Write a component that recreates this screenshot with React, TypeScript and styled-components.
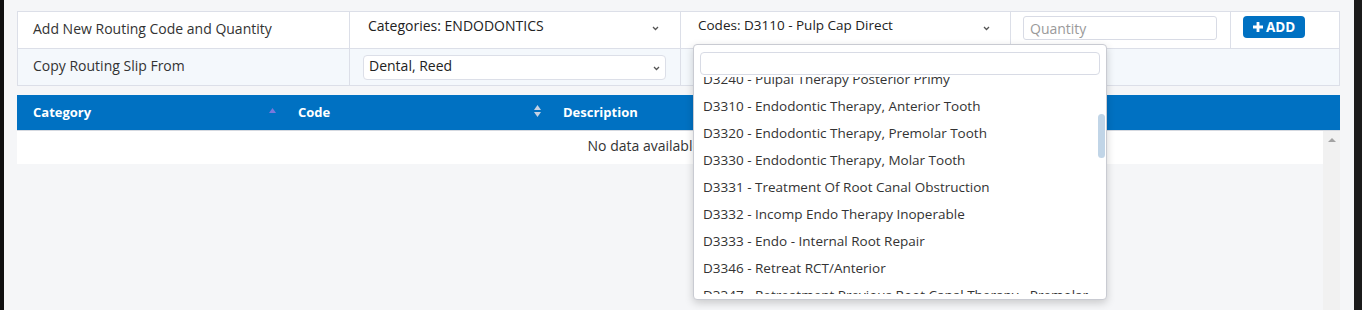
import React, { useLayoutEffect, useRef } from 'react';
import styled, { createGlobalStyle } from 'styled-components';

const GlobalStyle = createGlobalStyle`
  html, body {
    margin: 0;
    padding: 0;
    background: #f5f6f8;
  }
  body {
    font-family: 'Open Sans', 'Liberation Sans', sans-serif;
    font-size: 14px;
    color: #333;
    overflow: hidden;
  }
  * { box-sizing: border-box; }
`;

const codes = [
  'D3110 - Pulp Cap Direct',
  'D3120 - Pulp Cap Indirect',
  'D3220 - Therapeutic Pulpotomy',
  'D3221 - Pulpal Debridement',
  'D3222 - Partial Pulpotomy Apexogenesis',
  'D3230 - Pulpal Therapy Anterior Primy',
  'D3240 - Pulpal Therapy Posterior Primy',
  'D3310 - Endodontic Therapy, Anterior Tooth',
  'D3320 - Endodontic Therapy, Premolar Tooth',
  'D3330 - Endodontic Therapy, Molar Tooth',
  'D3331 - Treatment Of Root Canal Obstruction',
  'D3332 - Incomp Endo Therapy Inoperable',
  'D3333 - Endo - Internal Root Repair',
  'D3346 - Retreat RCT/Anterior',
  'D3347 - Retreatment Previous Root Canal Therapy - Premolar',
  'D3348 - Retreatment Previous Root Canal Therapy - Molar',
  'D3351 - Apexification/Recalc Initial',
  'D3352 - Apexification/Recalc Interim',
  'D3353 - Apexification/Recalc Final',
  'D3355 - Pulpal Regeneration Initial',
  'D3356 - Pulpal Regeneration Interim',
  'D3357 - Pulpal Regeneration Completion',
  'D3410 - Apicoectomy Anterior',
  'D3421 - Apicoectomy Premolar',
  'D3425 - Apicoectomy Molar',
  'D3426 - Apicoectomy Each Add Root',
  'D3427 - Periradicular Surgery W/O Apico',
  'D3428 - Bone Graft Periradicular',
  'D3429 - Bone Graft Each Add Site',
  'D3430 - Retrograde Filling',
  'D3431 - Biologic Materials Periradicular',
  'D3432 - Guided Tissue Regeneration',
  'D3450 - Root Amputation',
  'D3460 - Endodontic Endosseous Implant',
  'D3470 - Intentional Replantation',
  'D3471 - Surgical Repair Root Resorption Anterior',
  'D3472 - Surgical Repair Root Resorption Premolar',
  'D3473 - Surgical Repair Root Resorption Molar',
  'D3501 - Surgical Exposure Root Anterior',
  'D3502 - Surgical Exposure Root Premolar',
  'D3503 - Surgical Exposure Root Molar',
  'D3910 - Isolation Tooth W Rubber Dam',
  'D3920 - Tooth Splitting',
  'D3950 - Canal Prep/Fitting Of Dowel',
  'D3999 - Endodontic Procedure',
];

const Chevron = () => (
  <svg width="7" height="5" viewBox="0 0 7 5">
    <path d="M1 1l2.5 2.5L6 1" fill="none" stroke="#555" strokeWidth="1.3" />
  </svg>
);

const SortUp = () => (
  <svg width="7" height="6" viewBox="0 0 7 6">
    <path d="M3.5 0L7 5H0z" fill="#7b78dc" />
  </svg>
);

const SortBoth = () => (
  <svg width="7" height="12" viewBox="0 0 7 12">
    <path d="M3.5 0L7 5H0z" fill="#c7d2e3" />
    <path d="M3.5 12L0 7h7z" fill="#c7d2e3" />
  </svg>
);

const PlusIcon = () => (
  <svg width="10" height="10" viewBox="0 0 10 10">
    <path d="M3.6 0h2.8v3.6H10v2.8H6.4V10H3.6V6.4H0V3.6h3.6z" fill="#fff" />
  </svg>
);

const App: React.FC = () => {
  const listRef = useRef<HTMLDivElement>(null);

  useLayoutEffect(() => {
    if (listRef.current) {
      listRef.current.scrollTop = 6 * 27 + 11;
    }
  }, []);

  return (
    <Screen>
      <GlobalStyle />
      <EdgeLeft />
      <Main>
        <FormTable>
          <FormRow $cols="331px 331px 330px 220px 1fr" $height={36}>
            <LabelCell>Add New Routing Code and Quantity</LabelCell>
            <SelectCell $padLeft={18} $padRight={21}>
              <span>Categories: ENDODONTICS</span>
              <ChevronWrap><Chevron /></ChevronWrap>
            </SelectCell>
            <SelectCell $padLeft={17} $padRight={20} $small>
              <span>Codes: D3110 - Pulp Cap Direct</span>
              <ChevronWrap><Chevron /></ChevronWrap>
              <Dropdown>
                <SearchBox />
                <OptionList ref={listRef}>
                  {codes.map((c) => (
                    <OptionItem key={c}>{c}</OptionItem>
                  ))}
                </OptionList>
                <ScrollThumb />
              </Dropdown>
            </SelectCell>
            <InputCell>
              <QuantityInput placeholder="Quantity" />
            </InputCell>
            <InputCell>
              <AddButton>
                <PlusIcon />
                ADD
              </AddButton>
            </InputCell>
          </FormRow>
          <FormRow $cols="331px 331px 1fr" $height={37} $shade>
            <LabelCell>Copy Routing Slip From</LabelCell>
            <BoxCell>
              <SelectBox>
                <span>Dental, Reed</span>
                <ChevronWrap><Chevron /></ChevronWrap>
              </SelectBox>
            </BoxCell>
            <BoxCell>
              <CopyButton>Copy</CopyButton>
            </BoxCell>
          </FormRow>
        </FormTable>

        <DataTable>
          <HeaderRow>
            <HeadCell>
              Category
              <SortIcon><SortUp /></SortIcon>
            </HeadCell>
            <HeadCell>
              Code
              <SortIcon><SortBoth /></SortIcon>
            </HeadCell>
            <HeadCell>
              Description
              <SortIcon><SortBoth /></SortIcon>
            </HeadCell>
            <HeadCell>
              Quantity
              <SortIcon><SortBoth /></SortIcon>
            </HeadCell>
            <HeadCell />
            <HeadCell />
          </HeaderRow>
          <ScrollBody>
            <BodyArea>
              <EmptyRow>No data available in table</EmptyRow>
            </BodyArea>
            <ScrollTrack>
              <TrackArrow />
            </ScrollTrack>
          </ScrollBody>
        </DataTable>
      </Main>
      <EdgeRight />
    </Screen>
  );
};

export default App;

const Screen = styled.div`
  display: flex;
  height: 310px;
  overflow: hidden;
`;

const EdgeLeft = styled.div`
  width: 4px;
  flex-shrink: 0;
  background: #101010;
`;

const EdgeRight = styled.div`
  width: 8px;
  flex-shrink: 0;
  background: #1b1b1b;
`;

const Main = styled.div`
  flex: 1;
  min-width: 0;
  padding: 11px 14px 0 13px;
`;

const FormTable = styled.div`
  border: 1px solid #dcdfe8;
  background: #fff;
`;

const FormRow = styled.div<{ $cols: string; $height: number; $shade?: boolean }>`
  display: grid;
  grid-template-columns: ${(p) => p.$cols};
  height: ${(p) => p.$height}px;
  background: ${(p) => (p.$shade ? '#f4f8fc' : '#fff')};
  & + & {
    border-top: 1px solid #dcdfe8;
  }
  & > * + * {
    border-left: 1px solid #dcdfe8;
  }
`;

const LabelCell = styled.div`
  display: flex;
  align-items: center;
  padding: 0 0 3px 15px;
  color: #333;
`;

const SelectCell = styled.div<{ $padLeft: number; $padRight: number; $small?: boolean }>`
  position: relative;
  display: flex;
  justify-content: space-between;
  padding: 4px ${(p) => p.$padRight}px 0 ${(p) => p.$padLeft}px;
  font-size: ${(p) => (p.$small ? '13.5px' : '14px')};
  color: #222;
`;

const ChevronWrap = styled.span`
  display: flex;
  margin-top: 10px;
  height: 5px;
`;

const InputCell = styled.div`
  padding: 4px 13px 0 12px;
`;

const QuantityInput = styled.input`
  width: 100%;
  height: 24px;
  border: 1px solid #d8dbe5;
  border-radius: 3px;
  padding: 0 6px;
  font-family: inherit;
  font-size: 14px;
  color: #333;
  outline: none;
  &::placeholder {
    color: #9a9a9a;
  }
`;

const AddButton = styled.button`
  display: inline-flex;
  align-items: center;
  gap: 3px;
  height: 22px;
  padding: 0 10px 0 10px;
  border: none;
  border-radius: 4px;
  background: #0071c2;
  color: #fff;
  font-family: inherit;
  font-size: 13.5px;
  font-weight: 700;
  cursor: pointer;
`;

const BoxCell = styled.div`
  display: flex;
  align-items: center;
  padding: 0 14px 0 13px;
`;

const SelectBox = styled.div`
  display: flex;
  justify-content: space-between;
  width: 100%;
  height: 25px;
  padding: 0 5px 0 5px;
  line-height: 20px;
  border: 1px solid #dcdfe8;
  border-radius: 4px;
  background: #fff;
  color: #222;
  ${ChevronWrap} {
    margin-top: 10px;
  }
`;

const CopyButton = styled.button`
  height: 25px;
  padding: 0 14px;
  border: none;
  border-radius: 4px;
  background: #0071c2;
  color: #fff;
  font-family: inherit;
  font-size: 13px;
  font-weight: 700;
`;

const Dropdown = styled.div`
  position: absolute;
  top: 32px;
  left: 12px;
  z-index: 10;
  width: 414px;
  height: 256px;
  display: flex;
  flex-direction: column;
  background: #fff;
  border: 1px solid #c9cbd2;
  border-radius: 4px;
  box-shadow: 0 3px 8px rgba(0, 0, 0, 0.18);
`;

const SearchBox = styled.input`
  flex-shrink: 0;
  height: 23px;
  margin: 7px 6px 2px 6px;
  border: 1px solid #d8dbe5;
  border-radius: 4px;
  outline: none;
`;

const OptionList = styled.div`
  flex: 1;
  margin-bottom: 5px;
  overflow-y: auto;
  scrollbar-width: none;
  &::-webkit-scrollbar {
    display: none;
  }
`;

const OptionItem = styled.div`
  height: 27px;
  line-height: 27px;
  padding-left: 9px;
  white-space: nowrap;
  overflow: hidden;
  font-size: 13.5px;
  color: #333;
`;

const ScrollThumb = styled.div`
  position: absolute;
  top: 69px;
  right: 1px;
  width: 7px;
  height: 44px;
  border-radius: 4px;
  background: #c1d5e7;
`;

const DataTable = styled.div`
  margin-top: 9px;
`;

const HeaderRow = styled.div`
  display: grid;
  grid-template-columns: 265px 265px 265px 265px 1fr 17px;
  height: 36px;
  background: #0071c2;
  border-bottom: 1px solid #d5d9e0;
`;

const HeadCell = styled.div`
  display: flex;
  align-items: center;
  justify-content: space-between;
  padding: 0 6px 2px 16px;
  color: #fff;
  font-size: 13px;
  font-weight: 700;
`;

const SortIcon = styled.span`
  display: flex;
  margin-top: -2px;
`;

const ScrollBody = styled.div`
  display: flex;
  height: 200px;
`;

const BodyArea = styled.div`
  flex: 1;
`;

const EmptyRow = styled.div`
  height: 33px;
  line-height: 30px;
  text-align: center;
  background: #fff;
  color: #333;
`;

const ScrollTrack = styled.div`
  width: 17px;
  background: #f1f1f1;
  display: flex;
  justify-content: center;
  padding-top: 7px;
`;

const TrackArrow = styled.div`
  width: 0;
  height: 0;
  border-left: 4px solid transparent;
  border-right: 4px solid transparent;
  border-bottom: 4px solid #a3a3a3;
`;
